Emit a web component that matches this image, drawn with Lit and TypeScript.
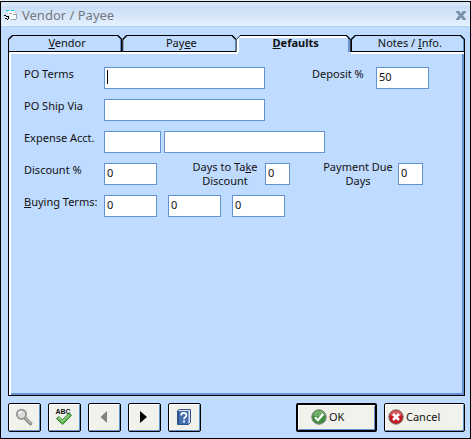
import { LitElement, html, css, svg } from "lit";
import { customElement, state } from "lit/decorators.js";

const key = (before: string, letter: string, after: string) =>
  html`${before}<u>${letter}</u>${after}`;

const TABS = [
  key("", "V", "endor"),
  key("Pay", "e", "e"),
  key("", "D", "efaults"),
  key("Notes / ", "I", "nfo."),
];

const icons = {
  app: svg`<svg width="13" height="12" viewBox="0 0 13 12" shape-rendering="crispEdges">
    <path d="M4 2h7v2h1v6H6V6H4z" fill="#fff"/><path d="M2 1h3v1H2zM7 1h3v1H7z" fill="#00d0e0"/>
    <path d="M5 4h3v1H5zM9 5h3v1H9zM11 3h1v1h-1zM12 5h1v5h-1zM7 10h5v1H7z" fill="#9aa4b0"/>
    <path d="M0 6h2v1H0zM2 7h2v1H2zM4 7h1v3H4zM1 9h2v1H1zM3 10h1v1H3z" fill="#000"/></svg>`,
  close: svg`<svg width="10" height="9" viewBox="0 0 10 9">
    <path d="M0 0h3.200L5 2.500 6.800 0H10v1L7 4.500 10 8v1H6.800L5 6.500 3.200 9H0V8l3-3.500L0 1z" fill="#7b90ad"/></svg>`,
  find: svg`<svg width="18" height="18" viewBox="0 0 18 18">
    <path d="M10 10l5.500 5.500" stroke="#8a8a8a" stroke-width="3.600" stroke-linecap="round"/>
    <path d="M10.500 9.800l5.300 5.300" stroke="#c4c4c4" stroke-width="1.200" stroke-linecap="round"/>
    <circle cx="6.500" cy="6.300" r="4.600" fill="#dadada" stroke="#999" stroke-width="2"/>
    <path d="M4 6a3 3 0 0 1 3-2.700" stroke="#fff" stroke-width="1.300" fill="none"/></svg>`,
  spell: svg`<svg width="18" height="18" viewBox="0 0 18 18">
    <text x="8" y="6" text-anchor="middle" font-family="Liberation Sans, sans-serif" font-weight="700" font-size="7" fill="#111">ABC</text>
    <path d="M1.500 10.500l2.500-2 3.300 3.300L14 5.500l2.500 1.700L7.700 16.500z" fill="#62b552" stroke="#2d7f2b"/>
    <path d="M3 10.300l1-.7 3.400 3.300L14.200 7" fill="none" stroke="#b4e3a5"/></svg>`,
  prev: svg`<svg width="18" height="18" viewBox="0 0 18 18"><path d="M12 3v12L5.500 9z" fill="#808080"/></svg>`,
  next: svg`<svg width="18" height="18" viewBox="0 0 18 18"><path d="M5 3v12l7-6z" fill="#000"/></svg>`,
  help: svg`<svg width="18" height="18" viewBox="0 0 18 18">
    <path d="M2.500 2.500l2-1h11v13l-2 2h-11z" fill="#dbe4f0" stroke="#2e528c"/>
    <path d="M2 3h11.500v13H2z" fill="#456fae"/><path d="M2 3h2v13H2z" fill="#2d5088"/>
    <path d="M6.200 7.400c0-3.200 5.200-3.200 5.200-.2 0 2-2.400 1.900-2.400 4M9 12.500v2" fill="none" stroke="#fff" stroke-width="1.800"/></svg>`,
  ok: svg`<svg width="16" height="16" viewBox="0 0 16 16">
    <circle cx="8" cy="8" r="7.200" fill="#3f9140" stroke="#777"/><path d="M2 6a6.300 6.300 0 0 1 12 0q-6 3-12 0" fill="#72b06c"/>
    <path d="M4 8.200l3 3L12.200 5" fill="none" stroke="#fff" stroke-width="2.200"/></svg>`,
  cancel: svg`<svg width="16" height="16" viewBox="0 0 16 16">
    <circle cx="8" cy="8" r="7.200" fill="#c4181f" stroke="#777"/><path d="M2 6a6.300 6.300 0 0 1 12 0q-6 3-12 0" fill="#d9565a"/>
    <path d="M5 5l6 6M11 5l-6 6" stroke="#fff" stroke-width="2.600"/></svg>`,
};

@customElement("app-root")
export class AppRoot extends LitElement {
  @state() private active = 2;

  static styles = css`
    :host {
      display: block;
      box-sizing: border-box;
      min-height: 100vh;
      padding-top: 1px;
      background: #e4effb;
      color: #111;
      font: 11px/14px "Noto Sans", sans-serif;
    }
    * { box-sizing: border-box; }
    button, input { font: inherit; color: inherit; margin: 0; }
    svg { display: block; flex: none; }
    u { text-decoration: underline 1px; text-underline-offset: 1px; text-decoration-skip-ink: none; }
    .window {
      display: flex;
      flex-direction: column;
      min-height: calc(100vh - 1px);
      border: 1px solid #000;
      background: #bfdbff;
    }
    .title {
      display: flex;
      align-items: center;
      gap: 5px;
      height: 25px;
      padding: 0 4px 2px 3px;
      border-top: 4px solid #d8e8f8;
      border-bottom: 1px solid #b0d4e8;
      background: linear-gradient(#c9def6, #e5f1fe);
      color: #73777d;
    }
    h1 { flex: 1; margin: 0; font-size: 13px; font-weight: 400; line-height: 16px; }
    .close { padding: 0; border: 0; background: none; }
    .body { flex: 1; display: flex; flex-direction: column; padding: 8px 5px 6px 7px; }
    .tabs { display: flex; }
    .tab {
      position: relative;
      z-index: 0;
      flex: 1;
      height: 17px;
      padding: 0 0 2px 4px;
      border: 0;
      background: #000;
      clip-path: polygon(0 100%, 0 4px, 4px 0, calc(100% - 4px) 0, 100% 4px, 100% 100%);
    }
    .tab::before {
      content: "";
      position: absolute;
      z-index: -1;
      inset: 1px;
      border-right: 1px solid #6391d2;
      background: #bfdbff;
      clip-path: polygon(0 100%, 0 4px, 4px 0, calc(100% - 4px) 0, 100% 4px, 100% 100%);
    }
    .tab.on { font-weight: 700; }
    .tab.on::before { inset: 1px 1px 0 0; border: solid #fff; border-width: 2px 0 0 2px; border-right: 2px solid #6391d2; }
    .edge { display: flex; height: 2px; background: #fff; border-left: 1px solid #000; border-right: 1px solid #000; }
    .edge span { flex: 1; }
    .edge .on { background: #bfdbff; border-left: 2px solid #fff; }
    .panel {
      flex: 1;
      display: flex;
      flex-direction: column;
      gap: 10px;
      padding: 13px 30px 16px 15px;
      border: solid #000;
      border-width: 0 1px 1px;
      box-shadow: inset 2px 0 #fff, inset -2px -2px #6391d2;
    }
    .row { display: flex; height: 22px; }
    .row > label { width: 80px; }
    .row > label.center { align-self: center; text-align: center; }
    .row > label.deposit { width: 64px; }
    .panel input {
      width: 53px;
      height: 22px;
      padding: 0 2px 3px;
      border: 1px solid #6391d2;
      border-radius: 0;
      background: #fff;
      outline: 0;
    }
    .panel input.wide { width: 161px; }
    .panel input.code { width: 57px; }
    .panel input.days { width: 25px; }
    .focus { position: relative; display: flex; }
    .caret { position: absolute; left: 3px; top: 3px; width: 1px; height: 14px; background: #000; }
    .g3 { gap: 3px; }
    .terms { display: flex; gap: 11px; }
    .space { flex: 0 1 47px; }
    .space.s { flex-basis: 28px; }
    .foot { display: flex; gap: 7px; padding-top: 7px; }
    .foot button {
      display: flex;
      align-items: center;
      justify-content: center;
      gap: 2px;
      width: 33px;
      height: 29px;
      padding: 0 2px 1px 0;
      border: 1px solid #000;
      border-radius: 2px;
      background: #f2f2ec;
      box-shadow: inset 1px 1px #fff, inset -1px -1px #6391d2;
    }
    .foot .text { width: 81px; justify-content: flex-start; }
    .foot .text.default { border-width: 2px; margin-left: auto; padding-left: 13px; }
    .foot .text.cancel { padding-left: 3px; }
  `;

  render() {
    return html`
      <main class="window">
        <header class="title">
          ${icons.app}
          <h1>Vendor / Payee</h1>
          <button class="close" aria-label="Close">${icons.close}</button>
        </header>
        <div class="body">
          <div class="tabs" role="tablist">
            ${TABS.map((t, i) => html`<button
              class="tab ${i === this.active ? "on" : ""}" role="tab"
              aria-selected=${i === this.active ? "true" : "false"}
              @click=${() => (this.active = i)}>${t}</button>`)}
          </div>
          <div class="edge">${TABS.map((_, i) => html`<span class=${i === this.active ? "on" : ""}></span>`)}</div>
          <form class="panel">
            <div class="row">
              <label for="terms">PO Terms</label>
              <div class="focus"><input id="terms" class="wide"><span class="caret"></span></div>
              <span class="space"></span>
              <label class="deposit" for="deposit">Deposit %</label>
              <input id="deposit" value="50">
            </div>
            <div class="row">
              <label for="ship">PO Ship Via</label>
              <input id="ship" class="wide">
            </div>
            <div class="row">
              <label for="acct">Expense Acct.</label>
              <div class="row g3">
                <input id="acct" class="code">
                <input class="wide" aria-label="Expense account name">
              </div>
            </div>
            <div class="row">
              <label for="disc">Discount %</label>
              <input id="disc" value="0">
              <span class="space s"></span>
              <label class="center" for="take">${key("Days to Ta", "k", "e")}<br>Discount</label>
              <input id="take" class="days" value="0">
              <span class="space s"></span>
              <label class="center" for="due">Payment Due<br>Days</label>
              <input id="due" class="days" value="0">
            </div>
            <div class="row">
              <label for="buy">${key("", "B", "uying Terms:")}</label>
              <div class="terms">
                <input id="buy" value="0">
                <input value="0" aria-label="Buying terms 2">
                <input value="0" aria-label="Buying terms 3">
              </div>
            </div>
          </form>
          <footer class="foot">
            <button aria-label="Find">${icons.find}</button>
            <button aria-label="Check spelling">${icons.spell}</button>
            <button aria-label="Previous">${icons.prev}</button>
            <button aria-label="Next">${icons.next}</button>
            <button aria-label="Help">${icons.help}</button>
            <button class="text default">${icons.ok}OK</button>
            <button class="text cancel">${icons.cancel}Cancel</button>
          </footer>
        </div>
      </main>
    `;
  }
}
